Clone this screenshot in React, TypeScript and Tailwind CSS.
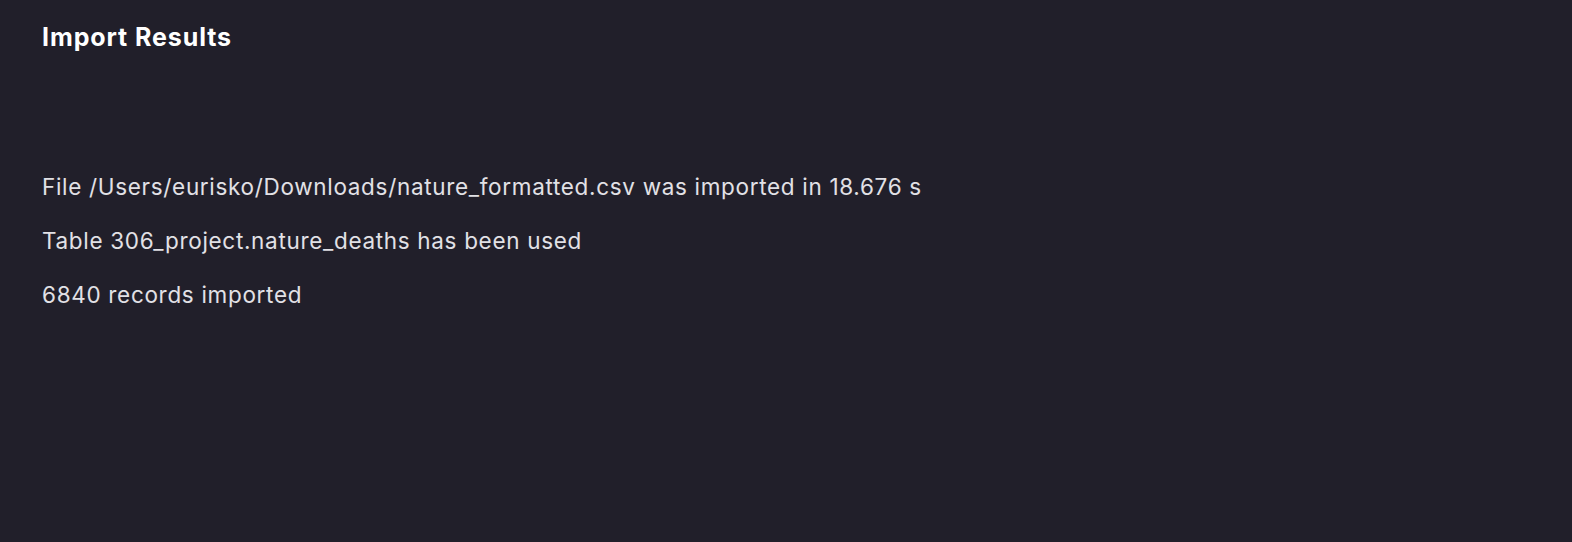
export default function App() {
  return (
    <div className="min-h-[542px] w-full bg-[#211f2a] px-[42px] pt-[22px] font-['Inter',sans-serif]">
      <h1 className="text-[25px] font-bold leading-[30px] tracking-[0.9px] text-white">Import Results</h1>
      <div className="mt-[121px] flex flex-col gap-[26px] text-[22.5px] leading-[28px] tracking-[0.68px] text-[#e2e1e6]">
        <p>File /Users/eurisko/Downloads/nature_formatted.csv was imported in 18.676 s</p>
        <p>Table 306_project.nature_deaths has been used</p>
        <p>6840 records imported</p>
      </div>
    </div>
  );
}
